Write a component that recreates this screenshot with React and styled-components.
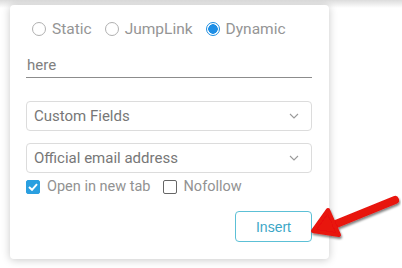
import React from 'react';
//Styling
import styled, { createGlobalStyle } from 'styled-components';

const GlobalStyle = createGlobalStyle`
  body {
    margin: 0;
    background: #ffffff;
    font-family: Roboto, 'Liberation Sans', sans-serif;
  }
`;

const Chevron = () => (
  <svg width='10' height='6' viewBox='0 0 10 6'>
    <path d='M1 1 L5 5 L9 1' fill='none' stroke='#9a9a9a' strokeWidth='1.1' />
  </svg>
);

const App = () => {
  return (
    <>
      <GlobalStyle />
      <Page>
        <Panel>
          <RadioRow>
            <RadioLabel>
              <Radio />
              Static
            </RadioLabel>
            <RadioLabel>
              <Radio />
              JumpLink
            </RadioLabel>
            <RadioLabel>
              <Radio checked />
              Dynamic
            </RadioLabel>
          </RadioRow>
          <TextField>here</TextField>
          <Select>
            <span>Custom Fields</span>
            <Chevron />
          </Select>
          <Select second>
            <span>Official email address</span>
            <Chevron />
          </Select>
          <CheckRow>
            <CheckLabel>
              <CheckBox checked>
                <svg width='10' height='8' viewBox='0 0 10 8'>
                  <path d='M1 4 L4 6.8 L9 1.2' fill='none' stroke='#fff' strokeWidth='2' />
                </svg>
              </CheckBox>
              Open in new tab
            </CheckLabel>
            <CheckLabel>
              <CheckBox />
              Nofollow
            </CheckLabel>
          </CheckRow>
          <Actions>
            <InsertButton>Insert</InsertButton>
          </Actions>
        </Panel>
        <Arrow width='92' height='50' viewBox='0 0 92 50'>
          <defs>
            <filter id='sh' x='-20%' y='-40%' width='140%' height='180%'>
              <feDropShadow dx='1' dy='2' stdDeviation='1.2' floodColor='#000' floodOpacity='0.5' />
            </filter>
          </defs>
          <g filter='url(#sh)'>
            <path d='M86 7 L22 33' stroke='#e8120c' strokeWidth='8' strokeLinecap='round' />
            <path d='M4 38 L19 17 L30 42 Z' fill='#e8120c' stroke='#e8120c' strokeWidth='4' strokeLinejoin='round' />
          </g>
        </Arrow>
      </Page>
    </>
  );
};

const Page = styled.div`
  position: relative;
  width: 402px;
  height: 268px;
  padding: 5px 0 0 10px;
  box-sizing: border-box;
  background: linear-gradient(#dcdcdc, #ffffff 8px);
`;

const Panel = styled.div`
  width: 319px;
  height: 254px;
  box-sizing: border-box;
  padding: 15px 17px 0 16px;
  background: #fff;
  border-radius: 4px;
  box-shadow: 0 1px 8px rgba(0, 0, 0, 0.22);
  display: flex;
  flex-direction: column;
`;

const RadioRow = styled.div`
  display: flex;
  gap: 13px;
  padding-left: 6px;
  height: 18px;
  align-items: center;
`;

const RadioLabel = styled.label`
  display: flex;
  align-items: center;
  gap: 6px;
  font-size: 15.5px;
  color: #959595;
`;

const Radio = styled.span`
  width: 14px;
  height: 14px;
  border-radius: 50%;
  box-sizing: border-box;
  border: 1px solid ${(p) => (p.checked ? '#1f8fe0' : '#b0b0b0')};
  background: ${(p) => (p.checked ? 'radial-gradient(circle, #1e8fe6 0 4.5px, #fff 5px)' : '#fff')};
`;

const TextField = styled.div`
  margin-top: 18px;
  height: 21px;
  padding-left: 1px;
  font-size: 15px;
  color: #808080;
  border-bottom: 1px solid #8c8c8c;
`;

const Select = styled.div`
  margin-top: ${(p) => (p.second ? '12px' : '23px')};
  height: 30px;
  box-sizing: border-box;
  border: 1px solid #dcdcdc;
  border-radius: 4px;
  padding: 0 12px 0 7px;
  display: flex;
  align-items: center;
  justify-content: space-between;
  font-size: 15px;
  color: #777;
`;

const CheckRow = styled.div`
  display: flex;
  gap: 12px;
  margin-top: 5px;
  align-items: center;
`;

const CheckLabel = styled.label`
  display: flex;
  align-items: center;
  gap: 7px;
  font-size: 14.5px;
  color: #929292;
`;

const CheckBox = styled.span`
  width: 14px;
  height: 14px;
  box-sizing: border-box;
  border-radius: 2px;
  border: 1px solid ${(p) => (p.checked ? '#2a9fe0' : '#666')};
  background: ${(p) => (p.checked ? '#2a9fe0' : '#fff')};
  display: flex;
  align-items: center;
  justify-content: center;
`;

const Actions = styled.div`
  display: flex;
  justify-content: flex-end;
  margin-top: 16px;
`;

const InsertButton = styled.button`
  width: 77px;
  height: 31px;
  background: #fff;
  border: 1px solid #5cc0d6;
  border-radius: 4px;
  color: #3aa6c6;
  font-family: 'Liberation Sans', Arial, sans-serif;
  font-size: 14px;
`;

const Arrow = styled.svg`
  position: absolute;
  left: 309px;
  top: 193px;
`;

export default App;
